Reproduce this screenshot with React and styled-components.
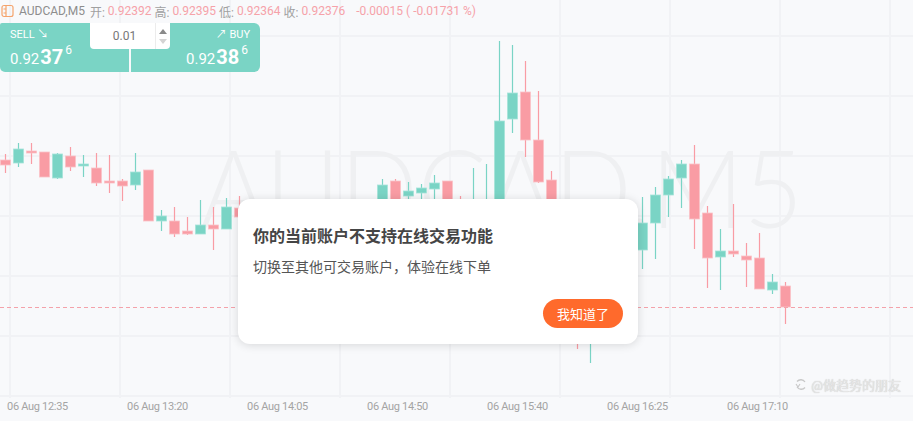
import React from 'react';
import styled, { createGlobalStyle } from 'styled-components';

const GlobalStyle = createGlobalStyle`
  html, body {
    margin: 0;
    padding: 0;
    background: #f8f9fb;
  }
  body {
    font-family: Roboto, "Noto Sans", "Noto Sans CJK SC", sans-serif;
  }
`;

const TEAL = '#7ad4c5';
const PINK = '#f99ca4';

// [center x, body top, body bottom, wick top, wick bottom, up?]
const candles = [
  [5, 160, 165, 154, 173, 0],
  [18, 149, 163, 143, 167, 1],
  [31, 151, 153, 143, 164, 0],
  [44, 152, 177, 152, 177, 0],
  [57, 154, 178, 153, 179, 1],
  [70, 156, 167, 147, 171, 0],
  [83, 164, 166, 155, 177, 1],
  [96, 168, 183, 153, 186, 0],
  [109, 181, 183, 155, 193, 0],
  [122, 181, 186, 179, 201, 0],
  [135, 172, 185, 153, 190, 1],
  [148, 170, 221, 170, 221, 0],
  [161, 216, 221, 210, 231, 1],
  [174, 221, 234, 207, 237, 0],
  [187, 231, 234, 217, 235, 0],
  [200, 225, 234, 200, 234, 1],
  [213, 225, 229, 207, 250, 0],
  [226, 207, 229, 198, 229, 1],
  [239, 208, 217, 196, 230, 0],
  [252, 215, 235, 208, 245, 1],
  [265, 220, 240, 212, 250, 0],
  [278, 225, 245, 215, 255, 0],
  [291, 230, 240, 220, 250, 1],
  [304, 225, 238, 215, 248, 1],
  [317, 220, 230, 210, 240, 1],
  [330, 215, 225, 205, 235, 1],
  [343, 210, 222, 203, 230, 0],
  [356, 205, 215, 202, 225, 1],
  [369, 200, 212, 201, 220, 1],
  [382, 185, 210, 179, 220, 1],
  [395, 181, 205, 179, 210, 0],
  [408, 191, 196, 182, 205, 1],
  [421, 188, 193, 184, 200, 1],
  [434, 183, 189, 175, 200, 1],
  [447, 181, 215, 181, 220, 0],
  [460, 205, 220, 196, 225, 0],
  [473, 200, 230, 168, 235, 1],
  [486, 205, 225, 164, 230, 1],
  [499, 121, 240, 41, 245, 1],
  [512, 93, 119, 45, 133, 1],
  [525, 92, 140, 61, 157, 0],
  [538, 140, 182, 91, 183, 0],
  [551, 180, 230, 171, 240, 0],
  [564, 225, 260, 210, 270, 0],
  [577, 260, 300, 240, 349, 0],
  [590, 290, 320, 280, 363, 1],
  [603, 270, 300, 255, 320, 1],
  [616, 250, 280, 240, 300, 1],
  [629, 240, 265, 220, 290, 1],
  [642, 223, 250, 197, 269, 1],
  [655, 195, 223, 187, 259, 1],
  [668, 179, 195, 176, 217, 1],
  [681, 164, 178, 160, 208, 1],
  [694, 164, 219, 145, 249, 0],
  [707, 213, 258, 206, 288, 0],
  [720, 251, 257, 229, 290, 1],
  [733, 251, 254, 204, 257, 0],
  [746, 256, 260, 243, 287, 0],
  [759, 258, 289, 233, 289, 0],
  [772, 282, 290, 274, 294, 1],
  [785, 286, 307, 282, 324, 0],
];

const timeLabels = ['06 Aug 12:35', '06 Aug 13:20', '06 Aug 14:05', '06 Aug 14:50', '06 Aug 15:40', '06 Aug 16:25', '06 Aug 17:10'];

const Screen = styled.div`
  position: relative;
  width: 913px;
  height: 421px;
  overflow: hidden;
  background: #f8f9fb;
`;

const ChartLayer = styled.svg`
  position: absolute;
  inset: 0;
`;

const Overlay = styled.div`
  position: relative;
  display: flex;
  flex-direction: column;
  height: 100%;
`;

const Header = styled.div`
  display: flex;
  align-items: center;
  gap: 3px;
  height: 22px;
  padding-left: 1px;
  font-size: 12px;
  color: #a0a0a0;
  white-space: nowrap;
`;

const Symbol = styled.span`
  color: #8d8d8d;
  margin: 0 2px 0 1px;
`;

const Value = styled.span`
  color: #f6a2a9;
  margin-right: ${p => (p.$gap ? '8px' : '0')};
`;

const TradePanel = styled.div`
  position: relative;
  display: flex;
  gap: 2px;
  width: 260px;
  height: 49px;
  margin-top: 1px;
`;

const Side = styled.div`
  flex: 1;
  display: flex;
  flex-direction: column;
  align-items: ${p => (p.$buy ? 'flex-end' : 'flex-start')};
  justify-content: space-between;
  padding: 6px ${p => (p.$buy ? '10px' : '0')} 5px ${p => (p.$buy ? '0' : '10px')};
  background: ${TEAL};
  color: #fff;
  border-radius: ${p => (p.$buy ? '0 6px 6px 0' : '2px 0 0 5px')};
`;

const SideLabel = styled.div`
  font-size: 11px;
  line-height: 12px;
`;

const Price = styled.div`
  display: flex;
  align-items: flex-start;
  line-height: 1;
  padding-right: ${p => (p.$buy ? '2px' : '0')};
`;

const PriceSmall = styled.span`
  font-size: 15px;
  margin-top: 5px;
`;

const PriceBig = styled.span`
  font-size: 20px;
  font-weight: 700;
  margin-left: 1px;
`;

const PriceSup = styled.span`
  font-size: 12px;
  margin-left: 2px;
  margin-top: -3px;
`;

const QtyBox = styled.div`
  position: absolute;
  left: 90px;
  top: 0;
  width: 80px;
  height: 26px;
  display: flex;
  background: #fff;
  border-radius: 0 0 4px 4px;
`;

const QtyValue = styled.div`
  flex: 1;
  display: flex;
  align-items: center;
  justify-content: center;
  font-size: 12px;
  color: #777;
  padding-left: 4px;
  border-right: 1px solid #ececec;
`;

const Stepper = styled.div`
  width: 14px;
  display: flex;
  flex-direction: column;
  align-items: center;
  justify-content: space-around;
  padding: 3px 0;
`;

const Arrow = styled.div`
  width: 0;
  height: 0;
  border-left: 4px solid transparent;
  border-right: 4px solid transparent;
  ${p => (p.$down
    ? `border-top: 5px solid #d4d4d4;`
    : `border-bottom: 5px solid #8a8a8a;`)}
`;

const Spacer = styled.div`
  flex: 1;
`;

const Axis = styled.div`
  display: grid;
  grid-template-columns: repeat(7, 120px);
  padding: 0 0 8px 7px;
  font-size: 11px;
  color: #a4a4a4;
  letter-spacing: -0.3px;
`;

const Credit = styled.div`
  position: absolute;
  right: 12px;
  bottom: 27px;
  display: flex;
  align-items: center;
  gap: 3px;
  font-size: 13px;
  color: #e6e6e6;
  text-shadow: 0 0 1px #bdbdbd;
`;

const Dialog = styled.div`
  position: absolute;
  left: 238px;
  top: 199px;
  width: 400px;
  height: 145px;
  box-sizing: border-box;
  padding: 26px 15px 16px 15px;
  display: flex;
  flex-direction: column;
  background: #fff;
  border-radius: 12px;
  box-shadow: 0 1px 10px rgba(0, 0, 0, 0.14);
`;

const DialogTitle = styled.div`
  font-family: "Noto Sans CJK SC", sans-serif;
  font-size: 16px;
  font-weight: 700;
  line-height: 20px;
  color: #454545;
`;

const DialogText = styled.div`
  margin-top: 11px;
  font-family: "Noto Sans CJK SC", sans-serif;
  font-size: 14px;
  line-height: 20px;
  color: #555;
`;

const DialogFooter = styled.div`
  margin-top: auto;
  display: flex;
  justify-content: flex-end;
`;

const ConfirmButton = styled.button`
  width: 80px;
  height: 29px;
  border: none;
  border-radius: 15px;
  background: #ff6a2c;
  color: #fff;
  font-family: "Noto Sans CJK SC", sans-serif;
  font-size: 13px;
  padding: 0;
`;

function Chart() {
  const vLines = [10, 120, 230, 340, 450, 560, 670, 780, 890];
  const hLines = [36, 96, 156, 216, 276, 336, 396];
  return (
    <ChartLayer width="913" height="421">
      {vLines.map(x => <line key={'v' + x} x1={x} x2={x} y1={0} y2={398} stroke="#f1f2f5" strokeWidth="2" />)}
      {hLines.map(y => <line key={'h' + y} x1={0} x2={913} y1={y} y2={y} stroke="#f1f2f5" strokeWidth="2" />)}
      <text
        x="200" y="228" textLength="603" lengthAdjust="spacingAndGlyphs"
        fontFamily="Lato, 'Liberation Sans', sans-serif" fontWeight="300" fontSize="108" fill="#eff0f2"
      >AUDCAD,M5</text>
      {candles.map(([x, top, bottom, wt, wb, up]) => {
        const color = up ? TEAL : PINK;
        return (
          <g key={x}>
            <line x1={x + 0.5} x2={x + 0.5} y1={wt} y2={wb} stroke={color} strokeWidth="1.2" />
            <rect x={x - 4.5} y={top} width="10" height={Math.max(bottom - top, 2)} fill={color} stroke={up ? '#a6e4d9' : '#fbc3c8'} strokeWidth="0.8" />
          </g>
        );
      })}
      <line x1="0" x2="913" y1="307.5" y2="307.5" stroke="#f4a2aa" strokeWidth="1" strokeDasharray="4 3" />
    </ChartLayer>
  );
}

function SymbolIcon() {
  return (
    <svg width="14" height="14" viewBox="0 0 14 14">
      <rect x="1" y="1.5" width="11" height="11" rx="2" fill="none" stroke="#f5a36c" strokeWidth="1.2" />
      <line x1="5" y1="1.5" x2="5" y2="12.5" stroke="#f5a36c" strokeWidth="1.2" />
      <line x1="2.5" y1="5" x2="5" y2="5" stroke="#f5a36c" strokeWidth="1" />
      <line x1="2.5" y1="9" x2="5" y2="9" stroke="#f5a36c" strokeWidth="1" />
    </svg>
  );
}

export default function App() {
  return (
    <>
      <GlobalStyle />
      <Screen>
        <Chart />
        <Overlay>
          <Header>
            <SymbolIcon />
            <Symbol>AUDCAD,M5</Symbol>
            <span>开:</span><Value>0.92392</Value>
            <span>高:</span><Value>0.92395</Value>
            <span>低:</span><Value>0.92364</Value>
            <span>收:</span><Value $gap>0.92376</Value>
            <Value>-0.00015 ( -0.01731 %)</Value>
          </Header>
          <TradePanel>
            <Side>
              <SideLabel>SELL ↘</SideLabel>
              <Price>
                <PriceSmall>0.92</PriceSmall><PriceBig>37</PriceBig><PriceSup>6</PriceSup>
              </Price>
            </Side>
            <Side $buy>
              <SideLabel>↗ BUY</SideLabel>
              <Price $buy>
                <PriceSmall>0.92</PriceSmall><PriceBig>38</PriceBig><PriceSup>6</PriceSup>
              </Price>
            </Side>
            <QtyBox>
              <QtyValue>0.01</QtyValue>
              <Stepper>
                <Arrow />
                <Arrow $down />
              </Stepper>
            </QtyBox>
          </TradePanel>
          <Spacer />
          <Axis>
            {timeLabels.map(t => <span key={t}>{t}</span>)}
          </Axis>
        </Overlay>
        <Credit>
          <svg width="14" height="13" viewBox="0 0 14 13">
            <path d="M3 3.5 A5 5 0 0 1 11 4 M11 9.5 A5 5 0 0 1 3 9" fill="none" stroke="#c8c8c8" strokeWidth="1.3" />
            <path d="M2 6 L4 9 L6 6" fill="none" stroke="#c8c8c8" strokeWidth="1.1" />
          </svg>
          <span>@做趋势的朋友</span>
        </Credit>
        <Dialog>
          <DialogTitle>你的当前账户不支持在线交易功能</DialogTitle>
          <DialogText>切换至其他可交易账户，体验在线下单</DialogText>
          <DialogFooter>
            <ConfirmButton>我知道了</ConfirmButton>
          </DialogFooter>
        </Dialog>
      </Screen>
    </>
  );
}
